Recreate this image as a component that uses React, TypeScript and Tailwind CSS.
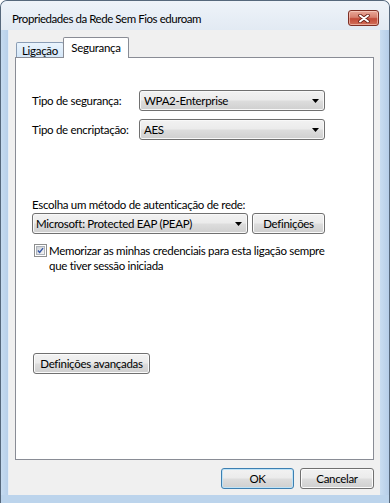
import React from "react";

const btnBg =
  "bg-[linear-gradient(to_bottom,#f2f2f2_0%,#ebebeb_48%,#dddddd_52%,#cfcfcf_100%)]";

function Arrow() {
  return (
    <svg width="7" height="4" viewBox="0 0 7 4" className="shrink-0">
      <path d="M0 0 H7 L3.5 4 Z" fill="#000" />
    </svg>
  );
}

function Combo({ text, className }: { text: string; className: string }) {
  return (
    <div
      className={`flex h-[21px] items-center justify-between rounded-[3px] border border-[#707070] ${btnBg} pl-[4px] pr-[5px] shadow-[inset_0_0_0_1px_#f8f8f8] ${className}`}
    >
      <span className="whitespace-nowrap leading-[15px]">{text}</span>
      <Arrow />
    </div>
  );
}

function Button({
  text,
  className,
  def,
}: {
  text: string;
  className: string;
  def?: boolean;
}) {
  return (
    <div
      className={`flex h-[21px] items-center justify-center rounded-[3px] border ${
        def
          ? "border-[#3c7fb1] shadow-[inset_0_0_0_1px_#bfe3f7]"
          : "border-[#707070] shadow-[inset_0_0_0_1px_#fbfbfb]"
      } ${btnBg} ${className}`}
    >
      <span className="whitespace-nowrap leading-[15px]">{text}</span>
    </div>
  );
}

export default function App() {
  return (
    <div className="flex h-[503px] w-[390px] flex-col overflow-hidden rounded-t-[7px] border-x border-t border-[#56687c] bg-[#bcd4ec] font-['Lato',sans-serif] text-[11.5px] tracking-[-0.3px] text-black">
      {/* title bar */}
      <div className="flex h-[29px] items-start justify-between bg-[linear-gradient(to_bottom,#eef3f9,#e2eaf3)] pl-[11px] pr-[10px] pt-[9px]">
        <span className="whitespace-nowrap text-[11.5px] leading-[18px] tracking-[-0.45px] text-black">
          Propriedades da Rede Sem Fios eduroam
        </span>
        <div className="flex h-[16px] w-[31px] items-center justify-center rounded-[3px] border border-[#7d2f25] bg-[linear-gradient(to_bottom,#eaa899_0%,#d7806f_45%,#c24a38_55%,#d2705a_100%)] shadow-[inset_0_0_0_1px_rgba(255,220,210,0.55)]">
          <svg width="12" height="9" viewBox="0 0 12 9">
            <path d="M2 1.5 L10 7.5 M10 1.5 L2 7.5" stroke="#6b2118" strokeWidth="3.6" strokeLinecap="round" />
            <path d="M2 1.5 L10 7.5 M10 1.5 L2 7.5" stroke="#ffffff" strokeWidth="2" strokeLinecap="round" />
          </svg>
        </div>
      </div>

      {/* middle */}
      <div className="flex flex-1">
        <div className="w-[7px] bg-[linear-gradient(to_right,#c6dbf0,#b8d0ea)]" />
        <div className="flex w-[372px] flex-col border-l border-[#e6eef7] bg-[#f0f0f0] px-[6px] pt-[7px]">
          {/* tabs */}
          <div className="flex h-[21px] items-end pl-[1px]">
            <div className="flex h-[16px] w-[48px] items-center justify-center rounded-t-[2px] border border-b-0 border-[#8a9db5] bg-[linear-gradient(to_bottom,#eaf4fd,#d3e6f8)]">
              <span className="leading-[14px]">Ligação</span>
            </div>
            <div className="relative z-10 -ml-px flex h-[21px] w-[66px] items-center justify-center rounded-t-[2px] border border-b-0 border-[#898c95] bg-white">
              <span className="leading-[14px]">Segurança</span>
            </div>
          </div>
          {/* panel */}
          <div className="-mt-px flex h-[403px] flex-col border border-[#898c95] bg-white pl-[16px] pt-[32px]">
            <div className="flex items-center">
              <span className="w-[107px] whitespace-nowrap">Tipo de segurança:</span>
              <Combo text="WPA2-Enterprise" className="w-[186px]" />
            </div>
            <div className="mt-[8px] flex items-center">
              <span className="w-[107px] whitespace-nowrap">Tipo de encriptação:</span>
              <Combo text="AES" className="w-[186px]" />
            </div>
            <div className="mt-[57px] whitespace-nowrap leading-[15px]">
              Escolha um método de autenticação de rede:
            </div>
            <div className="mt-[1px] flex">
              <Combo text="Microsoft: Protected EAP (PEAP)" className="w-[216px] !pl-[3px]" />
              <Button text="Definições" className="ml-[4px] w-[73px]" />
            </div>
            <div className="mt-[9px] flex items-start">
              <div className="ml-[2px] mt-[1px] flex h-[13px] w-[13px] items-center justify-center border border-[#8e8f8f] bg-white p-[1px]">
                <div className="flex h-full w-full items-center justify-center border border-[#aeb3b9] bg-[linear-gradient(135deg,#cbcfd5,#f6f6f6)]">
                  <svg width="9" height="9" viewBox="0 0 9 9">
                    <path d="M1.2 4.6 L3.4 7 L7.8 1.4" stroke="#3456a6" strokeWidth="1.8" fill="none" />
                  </svg>
                </div>
              </div>
              <div className="ml-[2px] whitespace-nowrap leading-[15px]">
                Memorizar as minhas credenciais para esta ligação sempre
                <br />
                que tiver sessão iniciada
              </div>
            </div>
            <Button text="Definições avançadas" className="ml-[1px] mt-[80px] w-[117px]" />
          </div>
          {/* bottom buttons */}
          <div className="mt-[8px] flex justify-end gap-[6px] pr-[0px]">
            <Button text="OK" def className="w-[73px]" />
            <Button text="Cancelar" className="w-[74px]" />
          </div>
        </div>
        <div className="flex-1 bg-[linear-gradient(to_right,#c9ddf1,#b5cde8)]" />
      </div>
      <div className="h-[8px] bg-[#bcd4ec]" />
    </div>
  );
}
